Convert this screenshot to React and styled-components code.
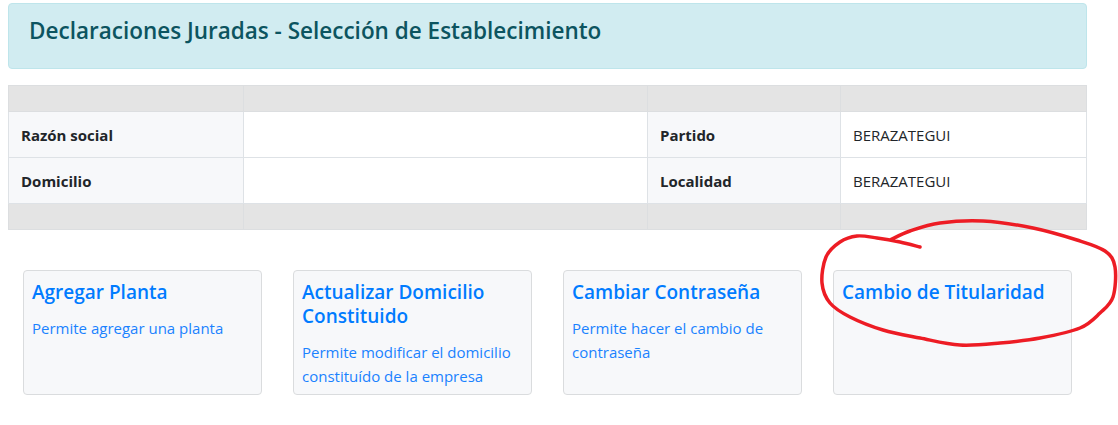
import React from "react";
import styled, { createGlobalStyle } from "styled-components";

const Global = createGlobalStyle`
  html, body { margin: 0; padding: 0; background: #fff; }
  body { font-family: "Open Sans", "Noto Sans", "Liberation Sans", sans-serif; color: #212529; }
  * { box-sizing: border-box; }
`;

const Page = styled.div`
  position: relative;
  padding: 3px 31px 0 8px;
  width: 1118px;
`;

const Alert = styled.div`
  background: #d1ecf1;
  border: 1px solid #bee5eb;
  border-radius: 4px;
  padding: 13px 20px 0;
  height: 66px;
`;

const AlertTitle = styled.h4`
  margin: 0;
  font-size: 22.5px;
  font-weight: 600;
  line-height: 28px;
  color: #0c5460;
`;

const Table = styled.table`
  margin-top: 16px;
  width: 100%;
  border-collapse: collapse;
  font-size: 15px;
`;

const Band = styled.tr`
  background: #e4e4e4;
  height: 26px;
  td { border: 1px solid #dcdee0; padding: 0; }
`;

const Cell = styled.td`
  border: 1px solid #dee2e6;
  padding: 0 12px;
  height: 46px;
  background: ${(p) => (p.$label ? "#f7f8fa" : "#fff")};
  font-weight: ${(p) => (p.$label ? 700 : 400)};
  color: #212529;
  width: ${(p) => p.$w}px;
`;

const Cards = styled.div`
  display: grid;
  grid-template-columns: repeat(4, 239px);
  column-gap: 31px;
  padding: 0 15px;
  margin-top: 40px;
`;

const Card = styled.a`
  display: block;
  height: 125px;
  background: #f7f8fa;
  border: 1px solid #dadcde;
  border-radius: 4px;
  padding: 9px 8px 8px 8px;
  text-decoration: none;
  color: #007bff;
`;

const CardTitle = styled.h5`
  margin: 0;
  font-size: 19px;
  font-weight: 600;
  line-height: 24px;
  color: #007bff;
`;

const CardText = styled.p`
  margin: 12px 0 0;
  font-size: 15px;
  line-height: 24px;
  color: #1a82ff;
`;

const Annotation = styled.svg`
  position: absolute;
  left: 0;
  top: 0;
  pointer-events: none;
`;

const cards = [
  { t: "Agregar Planta", d: "Permite agregar una planta" },
  { t: "Actualizar Domicilio Constituido", d: "Permite modificar el domicilio constituído de la empresa" },
  { t: "Cambiar Contraseña", d: "Permite hacer el cambio de contraseña" },
  { t: "Cambio de Titularidad", d: "" },
];

const pts = [
  [890, 240], [910, 231], [940, 223], [983, 221], [1033, 228], [1077, 240], [1105, 251],
  [1115, 267], [1113, 297], [1100, 313], [1080, 328], [1040, 338], [1000, 343], [960, 345],
  [920, 338], [883, 330], [850, 317], [830, 303], [822, 283], [826, 257], [840, 242],
  [857, 236], [877, 238], [900, 242], [920, 247],
];

function smoothPath(p) {
  let d = `M${p[0][0]} ${p[0][1]}`;
  for (let i = 0; i < p.length - 1; i++) {
    const p0 = p[i - 1] || p[i];
    const p1 = p[i];
    const p2 = p[i + 1];
    const p3 = p[i + 2] || p2;
    const c1x = p1[0] + (p2[0] - p0[0]) / 6;
    const c1y = p1[1] + (p2[1] - p0[1]) / 6;
    const c2x = p2[0] - (p3[0] - p1[0]) / 6;
    const c2y = p2[1] - (p3[1] - p1[1]) / 6;
    d += ` C${c1x.toFixed(1)} ${c1y.toFixed(1)}, ${c2x.toFixed(1)} ${c2y.toFixed(1)}, ${p2[0]} ${p2[1]}`;
  }
  return d;
}

export default function App() {
  return (
    <>
      <Global />
      <Page>
        <Alert>
          <AlertTitle>Declaraciones Juradas - Selección de Establecimiento</AlertTitle>
        </Alert>
        <Table>
          <tbody>
            <Band><td /><td /><td /><td /></Band>
            <tr>
              <Cell $label $w={235}>Razón social</Cell>
              <Cell $w={404}></Cell>
              <Cell $label $w={193}>Partido</Cell>
              <Cell>BERAZATEGUI</Cell>
            </tr>
            <tr>
              <Cell $label $w={235}>Domicilio</Cell>
              <Cell $w={404}></Cell>
              <Cell $label $w={193}>Localidad</Cell>
              <Cell>BERAZATEGUI</Cell>
            </tr>
            <Band><td /><td /><td /><td /></Band>
          </tbody>
        </Table>
        <Cards>
          {cards.map((c) => (
            <Card key={c.t} href="#">
              <CardTitle>{c.t}</CardTitle>
              {c.d && <CardText>{c.d}</CardText>}
            </Card>
          ))}
        </Cards>
        <Annotation width="1118" height="425" viewBox="0 0 1118 425">
          <path
            d={smoothPath(pts)}
            fill="none"
            stroke="#ed1c24"
            strokeWidth="3.5"
            strokeLinecap="round"
            strokeLinejoin="round"
          />
        </Annotation>
      </Page>
    </>
  );
}
